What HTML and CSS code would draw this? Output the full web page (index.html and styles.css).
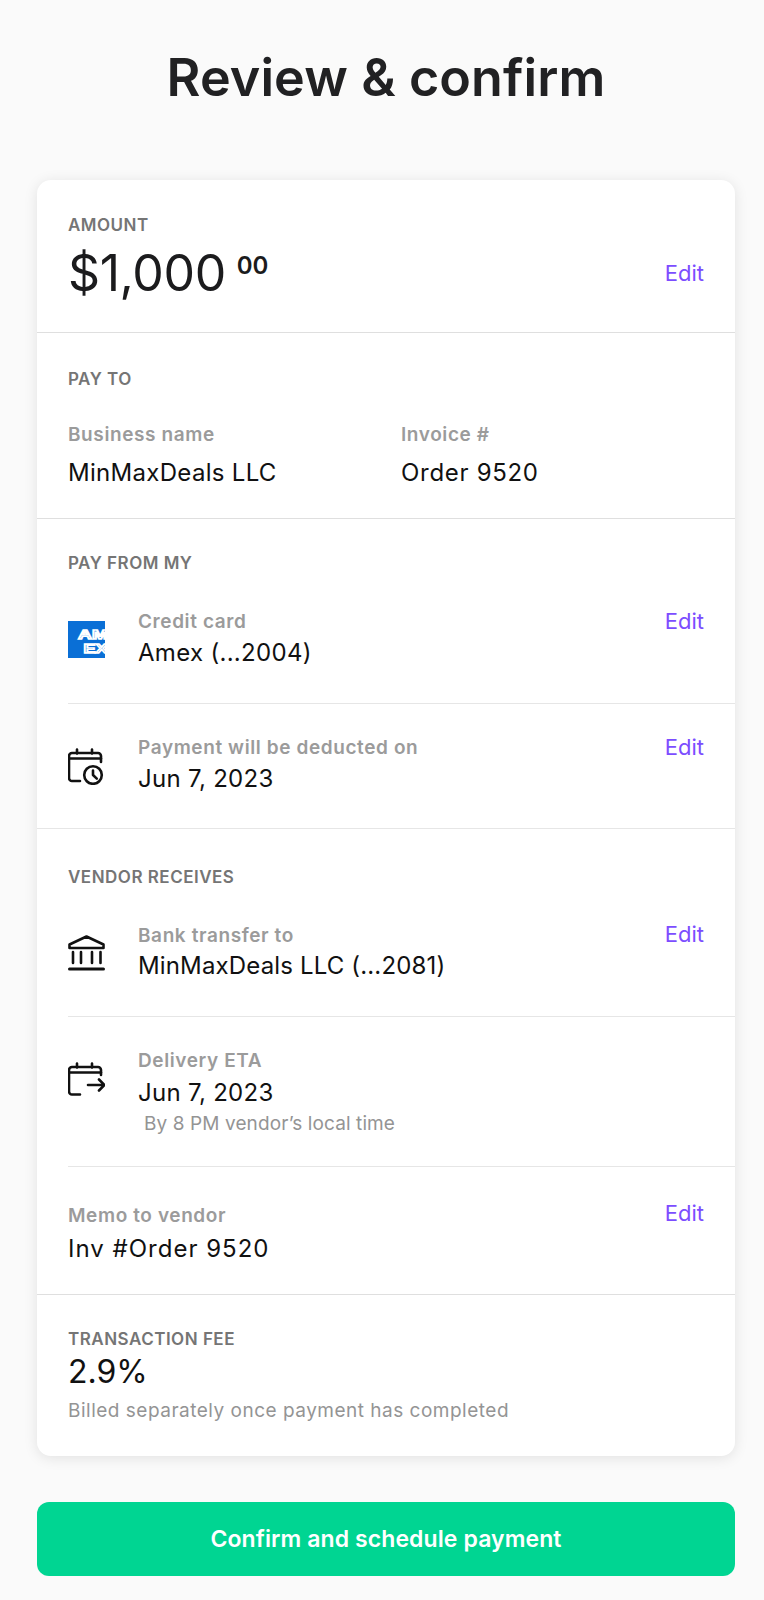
FILE: index.html
```html
<!DOCTYPE html>
<html lang="en">
<head>
<meta charset="utf-8">
<title>Review &amp; confirm</title>
<link rel="stylesheet" href="styles.css">
</head>
<body>
<main class="page">
  <h1 class="title">Review &amp; confirm</h1>
  <section class="card">
    <div class="sec sec-amount">
      <div class="eyebrow">AMOUNT</div>
      <div class="amount-row">
        <div class="amount">$1,000<sup class="cents">00</sup></div>
        <a class="edit">Edit</a>
      </div>
    </div>
    <div class="sec sec-payto">
      <div class="eyebrow">PAY TO</div>
      <div class="fields">
        <div class="field">
          <div class="label">Business name</div>
          <div class="value">MinMaxDeals LLC</div>
        </div>
        <div class="field">
          <div class="label">Invoice #</div>
          <div class="value value-wide">Order 9520</div>
        </div>
      </div>
    </div>
    <div class="sec sec-from">
      <div class="eyebrow">PAY FROM MY</div>
      <div class="row row-card">
        <svg class="icon" viewBox="0 0 37 37" aria-hidden="true">
          <rect width="37" height="37" fill="#0a6fd6"/>
          <text class="amex" x="10" y="17.500" textLength="30" lengthAdjust="spacingAndGlyphs">AM</text>
          <text class="amex" x="15.500" y="31.500" textLength="24" lengthAdjust="spacingAndGlyphs">EX</text>
        </svg>
        <div class="text">
          <div class="label">Credit card</div>
          <div class="value">Amex (...2004)</div>
        </div>
        <a class="edit">Edit</a>
      </div>
      <div class="row row-date rule">
        <svg class="icon" viewBox="0 0 37 37" fill="none" stroke="#111" stroke-width="2.600" stroke-linecap="round" stroke-linejoin="round" aria-hidden="true">
          <path d="M12 33H4a3 3 0 0 1-3-3V8a3 3 0 0 1 3-3h26a3 3 0 0 1 3 3v6"/>
          <path d="M1 10.500h32M9 1.500v4M24 1.500v4"/>
          <circle cx="25" cy="27" r="8.800"/>
          <path d="M25 22.500V27l3.800 3.600"/>
        </svg>
        <div class="text">
          <div class="label">Payment will be deducted on</div>
          <div class="value">Jun 7, 2023</div>
        </div>
        <a class="edit">Edit</a>
      </div>
    </div>
    <div class="sec sec-vendor rule">
      <div class="eyebrow">VENDOR RECEIVES</div>
      <div class="row row-bank">
        <svg class="icon" viewBox="0 0 37 37" fill="none" stroke="#111" stroke-width="2.600" stroke-linecap="round" stroke-linejoin="round" aria-hidden="true">
          <path d="M1.500 9.500 18.500 1.500 35.500 9.500V13H1.500Z"/>
          <path d="M5 17v11M13 17v11M24 17v11M32.500 17v11"/>
          <path d="M1.500 34h34" stroke-width="3"/>
        </svg>
        <div class="text">
          <div class="label">Bank transfer to</div>
          <div class="value value-tight">MinMaxDeals LLC (...2081)</div>
        </div>
        <a class="edit">Edit</a>
      </div>
      <div class="row row-eta rule">
        <svg class="icon" viewBox="0 0 37 37" fill="none" stroke="#111" stroke-width="2.600" stroke-linecap="round" stroke-linejoin="round" aria-hidden="true">
          <path d="M12 32.500H4a3 3 0 0 1-3-3V8a3 3 0 0 1 3-3h26a3 3 0 0 1 3 3v5"/>
          <path d="M1 10.500h32M9 1.500v4M24 1.500v4"/>
          <path d="M20 23h16M31 17.500l5.500 5.500-5.500 5.500"/>
        </svg>
        <div class="text">
          <div class="label">Delivery ETA</div>
          <div class="value">Jun 7, 2023</div>
          <div class="hint hint-indent">By 8 PM vendor’s local time</div>
        </div>
      </div>
      <div class="row row-memo rule">
        <div class="text">
          <div class="label">Memo to vendor</div>
          <div class="value value-memo">Inv #Order 9520</div>
        </div>
        <a class="edit">Edit</a>
      </div>
    </div>
    <div class="sec sec-fee">
      <div class="eyebrow">TRANSACTION FEE</div>
      <div class="value fee-value">2.9%</div>
      <div class="hint fee-hint">Billed separately once payment has completed</div>
    </div>
  </section>
  <button class="confirm" type="button">Confirm and schedule payment</button>
</main>
</body>
</html>
```

FILE: styles.css
```css
* { box-sizing: border-box; }

html, body { margin: 0; }

body {
  background: #fafafa;
  font-family: Inter, "Noto Sans", sans-serif;
  color: #1b1b1d;
}

.page {
  padding: 48px 29px 0 37px;
}

.title {
  margin: 0 0 72px;
  font-size: 52px;
  line-height: 60px;
  font-weight: 600;
  letter-spacing: 0.1px;
  text-align: center;
  color: #212123;
}

.card {
  background: #fff;
  border-radius: 14px;
  box-shadow: 0 2px 14px rgba(0, 0, 0, 0.1);
}

.sec { border-bottom: 1px solid #dfdfdf; }
.sec:last-child { border-bottom: 0; }

.sec-amount { padding: 32px 31px 22px; }
.sec-payto { padding: 33px 31px 27px; }
.sec-from { padding: 31px 0 0 31px; border-bottom: 0; }
.sec-vendor { padding: 35px 0 0; }
.sec-vendor > .eyebrow { margin-left: 31px; }
.sec-vendor > .row { margin-left: 31px; }
.sec-fee { padding: 31px 31px 34px; }

.eyebrow {
  margin-bottom: -2px;
  font-size: 17px;
  line-height: 26px;
  font-weight: 600;
  letter-spacing: 0.5px;
  color: #757575;
}

.label {
  margin-bottom: -2px;
  font-size: 19px;
  line-height: 26px;
  font-weight: 600;
  letter-spacing: 0.6px;
  color: #9b9b9b;
}

.value {
  font-size: 24px;
  line-height: 36px;
  font-weight: 400;
  letter-spacing: 0.3px;
  color: #111;
}

.value-wide { letter-spacing: 0.7px; }
.value-memo { letter-spacing: 1px; }
.value-tight { letter-spacing: 0.15px; }

.hint {
  font-size: 19px;
  line-height: 26px;
  margin-bottom: -2px;
  color: #949494;
}

.hint-indent { padding-left: 6px; letter-spacing: 0.1px; }

.edit {
  margin-left: auto;
  font-size: 22px;
  line-height: 24px;
  color: #7c4dff;
  cursor: pointer;
}

.amount-row {
  display: flex;
  align-items: center;
  height: 74px;
}

.amount {
  font-size: 50px;
  line-height: 74px;
  letter-spacing: -0.4px;
  color: #1b1b1d;
}

.cents {
  margin-left: 11px;
  font-size: 24px;
  line-height: 1;
  font-weight: 600;
  letter-spacing: 0;
  vertical-align: 17px;
}

.fields {
  display: grid;
  grid-template-columns: 333px 1fr;
  margin-top: 32px;
}

.fields .value { margin-top: 9px; }

.row {
  display: flex;
  align-items: flex-start;
  padding-right: 31px;
}

.rule { border-top: 1px solid #e6e6e6; }

.icon {
  flex: none;
  width: 37px;
  height: 37px;
  margin-right: 33px;
  margin-top: 12px;
}

.amex {
  font-family: "Liberation Sans", sans-serif;
  font-size: 12px;
  font-weight: 700;
  fill: #0a6fd6;
  stroke: #fff;
  stroke-width: 1.300px;
}

.row-card { padding-top: 35px; padding-bottom: 32px; }
.row-card .value { margin-top: 2px; }

.row-date { padding-top: 31px; padding-bottom: 31px; }
.row-date .value { margin-top: 2px; }
.row-date .icon { margin-top: 13px; }

.row-bank { padding-top: 35px; padding-bottom: 32px; }
.row-bank .value { margin-top: 1px; }
.row-bank .edit { margin-top: -1px; }

.row-eta { padding-top: 31px; padding-bottom: 31px; }
.row-eta .value { margin-top: 3px; }
.row-eta .icon { margin-top: 14px; }

.row-memo { padding-top: 36px; padding-bottom: 27px; }
.row-memo .value { margin-top: 4px; }
.row-memo .edit { margin-top: -2px; }

.fee-value { margin-top: 4px; font-size: 32px; letter-spacing: 0; }
.fee-hint { margin-top: 8px; letter-spacing: 0.5px; }

.confirm {
  display: block;
  width: 100%;
  height: 74px;
  margin-top: 46px;
  border: 0;
  border-radius: 12px;
  background: #00d592;
  color: #fff;
  font: 600 23px/1 Inter, "Noto Sans", sans-serif;
  letter-spacing: 0.1px;
}
```
